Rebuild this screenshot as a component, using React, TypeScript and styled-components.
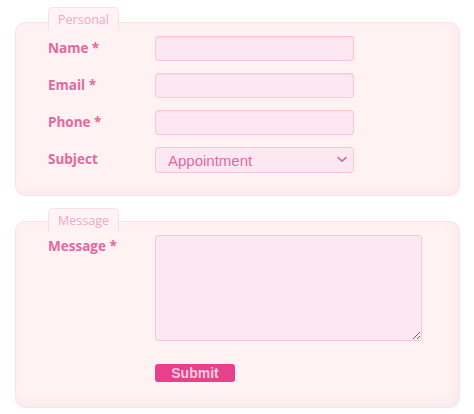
import React from "react";
import styled, { createGlobalStyle } from "styled-components";

const Global = createGlobalStyle`
  html, body { margin: 0; padding: 0; background: #ffffff; }
  body { font-family: "Open Sans", "DejaVu Sans", sans-serif; }
  * { box-sizing: border-box; }
`;

const Page = styled.div`
  width: 474px;
  height: 414px;
  padding: 7px 15px 0 15px;
  display: flex;
  flex-direction: column;
  gap: 12px;
  background: #ffffff;
`;

const Group = styled.section`
  display: flex;
  flex-direction: column;
  width: 445px;
`;

const Tab = styled.div<{ $above: number }>`
  position: relative;
  z-index: 1;
  margin-left: 33px;
  width: 71px;
  height: 24px;
  margin-bottom: ${(p) => p.$above - 24}px;
  padding-top: 3px;
  text-align: center;
  font-family: "Open Sans", sans-serif;
  font-size: 12.5px;
  color: #f3a6c7;
  background: linear-gradient(#fff4f6, #fef2f3);
  border: 1px solid #fadfe5;
  border-bottom: none;
  border-radius: 5px 5px 0 0;
`;

const Panel = styled.div<{ $pt: number; $pb: number }>`
  background: #fef2f3;
  border: 1px solid #fbe3e7;
  border-radius: 10px;
  box-shadow: inset -4px -4px 8px rgba(250, 225, 230, 0.5);
  padding: ${(p) => p.$pt}px 0 ${(p) => p.$pb}px 32px;
  display: flex;
  flex-direction: column;
  gap: 12px;
`;

const Row = styled.div<{ $top?: boolean }>`
  display: grid;
  grid-template-columns: 107px auto;
  align-items: ${(p) => (p.$top ? "start" : "center")};
`;

const Label = styled.label<{ $top?: boolean }>`
  font-family: "Open Sans", sans-serif;
  font-size: 13.5px;
  font-weight: bold;
  color: #e4689f;
  line-height: 18px;
  padding-top: ${(p) => (p.$top ? "2px" : "0")};
  margin-top: ${(p) => (p.$top ? "0" : "-2px")};
`;

const Input = styled.input`
  width: 199px;
  height: 25px;
  background: #fde8f2;
  border: 1px solid #f9c6dc;
  border-radius: 3px;
  box-shadow: inset 0 1px 2px rgba(240, 170, 200, 0.25);
  outline: none;
`;

const SelectWrap = styled.div`
  position: relative;
  width: 199px;
  height: 26px;
`;

const Select = styled.select`
  width: 199px;
  height: 26px;
  appearance: none;
  background: #fde8f2;
  border: 1px solid #f9c6dc;
  border-radius: 3px;
  padding: 0 0 0 12px;
  font-family: "Liberation Sans", Arial, sans-serif;
  font-size: 15px;
  color: #dc6aa3;
  outline: none;
`;

const Chevron = styled.svg`
  position: absolute;
  right: 7px;
  top: 9px;
  pointer-events: none;
`;

const TextArea = styled.textarea`
  width: 267px;
  height: 106px;
  background: #fde8f2;
  border: 1px solid #f9c6dc;
  border-radius: 3px;
  resize: both;
  outline: none;
`;

const ButtonRow = styled.div`
  display: flex;
  padding-left: 107px;
  margin-top: 11px;
`;

const Submit = styled.button`
  width: 80px;
  height: 18px;
  padding: 0;
  border: none;
  border-radius: 3px;
  background: #e8408b;
  color: #f9cde0;
  font-family: "Liberation Sans", Arial, sans-serif;
  font-weight: bold;
  font-size: 14px;
  line-height: 18px;
`;

export default function App() {
  return (
    <>
      <Global />
      <Page>
        <Group>
          <Tab $above={15}>Personal</Tab>
          <Panel $pt={13} $pb={22}>
            <Row>
              <Label>Name *</Label>
              <Input />
            </Row>
            <Row>
              <Label>Email *</Label>
              <Input />
            </Row>
            <Row>
              <Label>Phone *</Label>
              <Input />
            </Row>
            <Row>
              <Label>Subject</Label>
              <SelectWrap>
                <Select defaultValue="Appointment">
                  <option>Appointment</option>
                </Select>
                <Chevron width="10" height="7" viewBox="0 0 10 7">
                  <path d="M1 1.5 L5 5.2 L9 1.5" fill="none" stroke="#d0689a" strokeWidth="1.6" strokeLinecap="round" strokeLinejoin="round" />
                </Chevron>
              </SelectWrap>
            </Row>
          </Panel>
        </Group>
        <Group>
          <Tab $above={13}>Message</Tab>
          <Panel $pt={13} $pb={25}>
            <Row $top>
              <Label $top>Message *</Label>
              <TextArea />
            </Row>
            <ButtonRow>
              <Submit>Submit</Submit>
            </ButtonRow>
          </Panel>
        </Group>
      </Page>
    </>
  );
}
